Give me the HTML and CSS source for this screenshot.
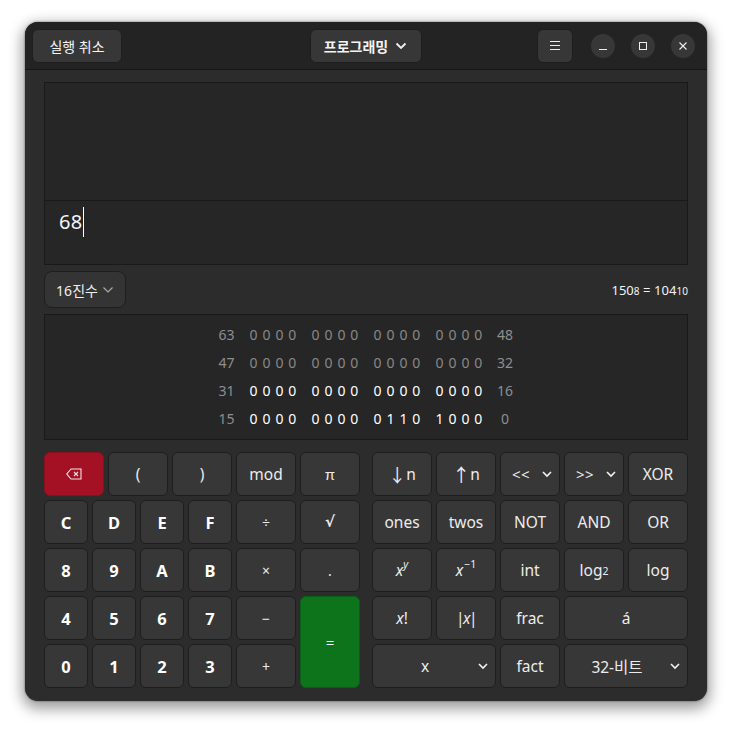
FILE: index.html
```html
<!DOCTYPE html>
<html lang="ko">
<head>
<meta charset="utf-8">
<title>계산기</title>
<link rel="stylesheet" href="styles.css">
</head>
<body>
<main class="window">
  <header class="titlebar">
    <button class="btn undo">실행 취소</button>
    <button class="btn mode">프로그래밍
      <svg class="chev" width="12" height="8" viewBox="0 0 12 8"><path d="M1.5 1.5 6 6l4.5-4.5" fill="none" stroke="#f2f2f2" stroke-width="1.8"/></svg>
    </button>
    <div class="controls">
      <button class="btn menu" aria-label="메뉴">
        <svg width="12" height="10" viewBox="0 0 12 10"><path d="M1 .5h10M1 4.5h10M1 8.5h10" stroke="#eee" stroke-width="1" fill="none"/></svg>
      </button>
      <button class="wbtn" aria-label="최소화"><svg width="10" height="10" viewBox="0 0 10 10"><path d="M1 8.5h8" stroke="#eee" stroke-width="1"/></svg></button>
      <button class="wbtn" aria-label="최대화"><svg width="10" height="10" viewBox="0 0 10 10"><rect x="1.5" y="1.5" width="7" height="7" fill="none" stroke="#eee" stroke-width="1"/></svg></button>
      <button class="wbtn" aria-label="닫기"><svg width="10" height="10" viewBox="0 0 10 10"><path d="M1.5 1.5l7 7M8.5 1.5l-7 7" stroke="#eee" stroke-width="1.1"/></svg></button>
    </div>
  </header>

  <div class="content">
    <section class="display">
      <div class="history"></div>
      <div class="entry"><span class="value">68</span></div>
    </section>

    <div class="baserow">
      <button class="btn base">16진수
        <svg width="12" height="8" viewBox="0 0 12 8"><path d="M1.5 1.5 6 6l4.5-4.5" fill="none" stroke="#aaa" stroke-width="1.2"/></svg>
      </button>
      <div class="conv">150<small>8</small> = 104<small>10</small></div>
    </div>

    <section class="bits">
      <div class="bitrow"><span class="lab l">63</span><span class="grp dim">0 0 0 0</span><span class="grp dim">0 0 0 0</span><span class="grp dim">0 0 0 0</span><span class="grp dim">0 0 0 0</span><span class="lab r">48</span></div>
      <div class="bitrow"><span class="lab l">47</span><span class="grp dim">0 0 0 0</span><span class="grp dim">0 0 0 0</span><span class="grp dim">0 0 0 0</span><span class="grp dim">0 0 0 0</span><span class="lab r">32</span></div>
      <div class="bitrow"><span class="lab l">31</span><span class="grp">0 0 0 0</span><span class="grp">0 0 0 0</span><span class="grp">0 0 0 0</span><span class="grp">0 0 0 0</span><span class="lab r">16</span></div>
      <div class="bitrow"><span class="lab l">15</span><span class="grp">0 0 0 0</span><span class="grp">0 0 0 0</span><span class="grp">0 1 1 0</span><span class="grp">1 0 0 0</span><span class="lab r">0</span></div>
    </section>

    <section class="keys">
      <div class="pad left">
        <button class="btn key s4 danger" aria-label="지우기">
          <svg width="16" height="12" viewBox="0 0 16 12"><path d="M5 1h10v10H5L.8 6z" fill="none" stroke="#f4e4e6" stroke-width="1.1"/><path d="M8 4l4 4M12 4l-4 4" stroke="#f4e4e6" stroke-width="1.1"/></svg>
        </button>
        <button class="btn key s4">(</button>
        <button class="btn key s4">)</button>
        <button class="btn key">mod</button>
        <button class="btn key pi">π</button>

        <button class="btn key s3 strong">C</button>
        <button class="btn key s3 strong">D</button>
        <button class="btn key s3 strong">E</button>
        <button class="btn key s3 strong">F</button>
        <button class="btn key op">÷</button>
        <button class="btn key root">√</button>

        <button class="btn key s3 strong">8</button>
        <button class="btn key s3 strong">9</button>
        <button class="btn key s3 strong">A</button>
        <button class="btn key s3 strong">B</button>
        <button class="btn key op">×</button>
        <button class="btn key op">.</button>

        <button class="btn key s3 strong">4</button>
        <button class="btn key s3 strong">5</button>
        <button class="btn key s3 strong">6</button>
        <button class="btn key s3 strong">7</button>
        <button class="btn key op">−</button>
        <button class="btn key equals">=</button>

        <button class="btn key s3 strong">0</button>
        <button class="btn key s3 strong">1</button>
        <button class="btn key s3 strong">2</button>
        <button class="btn key s3 strong">3</button>
        <button class="btn key op">+</button>
      </div>

      <div class="pad right">
        <button class="btn key"><span class="arrow">↓</span>n</button>
        <button class="btn key"><span class="arrow">↑</span>n</button>
        <button class="btn key drop"><span class="shift">&lt;&lt;</span><svg width="10" height="7" viewBox="0 0 10 7"><path d="M1 1l4 4 4-4" fill="none" stroke="#f2f2f2" stroke-width="1.6"/></svg></button>
        <button class="btn key drop"><span class="shift">&gt;&gt;</span><svg width="10" height="7" viewBox="0 0 10 7"><path d="M1 1l4 4 4-4" fill="none" stroke="#f2f2f2" stroke-width="1.6"/></svg></button>
        <button class="btn key">XOR</button>

        <button class="btn key">ones</button>
        <button class="btn key">twos</button>
        <button class="btn key">NOT</button>
        <button class="btn key">AND</button>
        <button class="btn key">OR</button>

        <button class="btn key"><i>x</i><sup>y</sup></button>
        <button class="btn key"><i>x</i><sup class="inv">−1</sup></button>
        <button class="btn key">int</button>
        <button class="btn key">log<small>2</small></button>
        <button class="btn key">log</button>

        <button class="btn key"><i>x</i>!</button>
        <button class="btn key abs">|<i>x</i>|</button>
        <button class="btn key">frac</button>
        <button class="btn key w2">á</button>

        <button class="btn key w2 wide"><span>x</span><svg class="end" width="10" height="7" viewBox="0 0 10 7"><path d="M1 1l4 4 4-4" fill="none" stroke="#f2f2f2" stroke-width="1.6"/></svg></button>
        <button class="btn key">fact</button>
        <button class="btn key w2 wide"><span>32-비트</span><svg class="end" width="10" height="7" viewBox="0 0 10 7"><path d="M1 1l4 4 4-4" fill="none" stroke="#f2f2f2" stroke-width="1.6"/></svg></button>
      </div>
    </section>
  </div>
</main>
</body>
</html>
```
FILE: styles.css
```css
* { box-sizing: border-box; }
html, body { margin: 0; height: 100%; background: #fff; }
body {
  font-family: "Noto Sans", "Noto Sans CJK KR", sans-serif;
  color: #f4f4f4;
  padding: 22px 25px 28px;
  overflow: hidden;
}
.window {
  width: 682px;
  height: 679px;
  border-radius: 13px;
  background: #2c2c2c;
  box-shadow: 0 5px 14px 3px rgba(0,0,0,.38), 0 0 2px rgba(0,0,0,.6);
  overflow: hidden;
  display: flex;
  flex-direction: column;
}
button { font: inherit; color: inherit; padding: 0; }
.titlebar {
  height: 48px;
  flex: none;
  background: #232323;
  border-bottom: 1px solid #161616;
  display: grid;
  grid-template-columns: 1fr auto 1fr;
  align-items: center;
  padding: 0 12px 0 7px;
}
.btn {
  display: flex;
  align-items: center;
  justify-content: center;
  background: #373737;
  border: 1px solid #1e1e1e;
  border-radius: 6px;
}
.undo { width: 90px; height: 34px; font-size: 14px; justify-self: start; border-color: #1f1f1f; }
.mode { width: 112px; height: 34px; margin-left: 4px; font-size: 14px; font-weight: 700; gap: 7px; }
.controls { display: flex; align-items: center; justify-self: end; }
.menu { width: 36px; height: 34px; margin-right: 18px; }
.wbtn {
  width: 24px; height: 24px; border: 0; border-radius: 50%;
  background: #373737;
  display: flex; align-items: center; justify-content: center;
  margin-left: 16px;
}
.menu + .wbtn { margin-left: 0; }
.content { flex: 1; padding: 12px 19px 13px; display: flex; flex-direction: column; }
.display {
  height: 183px;
  background: #262626;
  border: 1px solid #191919;
  flex: none;
  display: flex;
  flex-direction: column;
}
.history { height: 118px; border-bottom: 1px solid #191919; flex: none; }
.entry { padding: 6px 14px; font-size: 20px; line-height: 30px; }
.value { border-right: 1px solid #fff; padding-right: 1px; display: inline-block; height: 30px; letter-spacing: .3px; }
.baserow {
  height: 37px; margin-top: 6px; flex: none;
  display: flex; justify-content: space-between; align-items: center;
}
.base { width: 82px; height: 37px; font-size: 14px; gap: 4px; background: #343434; border-radius: 8px; color: #eee; }
.conv { font-size: 13px; padding-top: 1px; color: #f2f2f2; letter-spacing: .05px; }
.conv small { font-size: 10px; }
.bits {
  height: 126px; margin-top: 6px; flex: none;
  background: #262626; border: 1px solid #191919;
  display: flex; flex-direction: column; justify-content: center; align-items: center;
  font-size: 14px;
  padding-bottom: 2px;
}
.bitrow { display: grid; grid-template-columns: 16px repeat(4, 47px) 16px; column-gap: 15px; height: 28px; align-items: center; }
.lab { color: #8e8e8e; }
.l { text-align: right; margin-left: -1px; }
.r { text-align: center; margin-left: -1px; }
.grp { word-spacing: 1.3px; white-space: nowrap; color: #fff; }
.dim { color: #888; }
.keys { display: flex; gap: 12px; margin-top: 12px; flex: none; }
.pad { display: grid; gap: 4px; grid-auto-rows: 44px; }
.left { grid-template-columns: repeat(12, 12px) 60px 60px; }
.right { grid-template-columns: repeat(5, 60px); }
.key { font-size: 15.5px; color: #ececec; min-width: 0; }
.s4 { grid-column: span 4; }
.s3 { grid-column: span 3; }
.strong { font-weight: 700; font-size: 16.5px; color: #fff; }
.op { font-size: 14px; }
.pi { font-family: "Liberation Sans", sans-serif; font-size: 15px; }
.root { font-family: "DejaVu Sans", sans-serif; font-size: 15px; font-weight: 700; }
.danger { background: #a51124; border-color: #8a0f1f; }
.equals {
  grid-column: 14;
  grid-row: 4 / span 2;
  background: #0e741c;
  border-color: #0c5e17;
  color: #fff;
  font-size: 15px;
}
.w2 { grid-column: span 2; }
.arrow { font-size: 18px; margin-right: 0; }
.drop { gap: 12px; padding-left: 4px; }
.shift { font-size: 15px; letter-spacing: .5px; }
i { font-style: italic; }
sup { font-size: 10.5px; line-height: 1; align-self: flex-start; margin-top: 10px; font-style: italic; }
.inv { font-style: normal; margin-left: 1px; }
.abs { letter-spacing: -1.5px; }
.right small { font-size: 10.5px; align-self: flex-end; margin-bottom: 13px; }
.wide { position: relative; }
.wide span { padding-right: 18px; }
.end { position: absolute; right: 7px; top: 18px; }
```
